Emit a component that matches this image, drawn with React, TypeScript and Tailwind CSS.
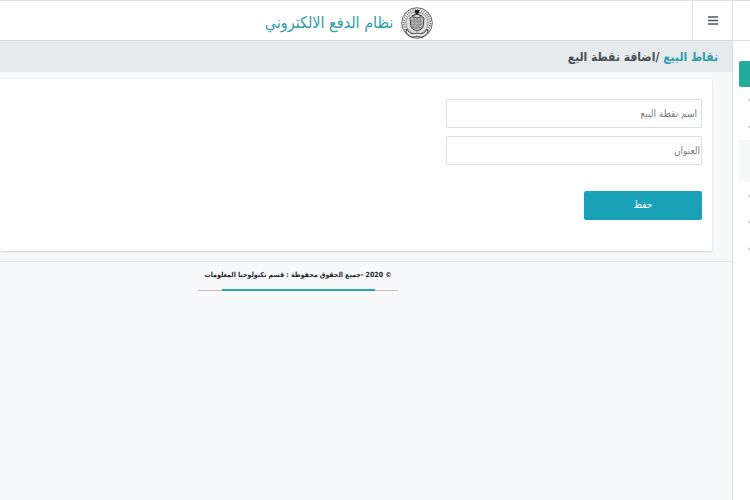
import React from "react";

const ticks = Array.from({ length: 36 }, (_, i) => (i * Math.PI) / 18);

function Seal() {
  return (
    <svg viewBox="0 0 32 32" className="size-8 shrink-0" aria-hidden="true">
      <circle cx="16" cy="16" r="15.3" fill="#f4f4f4" stroke="#555" strokeWidth="0.9" />
      <g stroke="#666" strokeWidth="0.9">
        {ticks.map((a) => (
          <line
            key={a}
            x1={16 + 12 * Math.cos(a)}
            y1={16 + 12 * Math.sin(a)}
            x2={16 + 14.2 * Math.cos(a + 0.06)}
            y2={16 + 14.2 * Math.sin(a + 0.06)}
          />
        ))}
      </g>
      <circle cx="16" cy="16" r="11.2" fill="#ddd" stroke="#777" strokeWidth="0.7" />
      <path d="M9 11c2-2 4-1 7 0 3-1 5-2 7 0l-1 9c-2 3-4 3-6 4-2-1-4-1-6-4z" fill="#bbb" stroke="#444" strokeWidth="1" />
      <path d="M10 14h12M10 17h12M11 20h10M13 11v11M16 11v12M19 11v11" stroke="#666" strokeWidth="0.8" strokeDasharray="2 1" />
      <path d="M6 22c3 6 7 5 10 4 3 1 7 2 10-4l1 3c-3 5-7 6-11 4-4 2-8 1-11-4z" fill="#eee" stroke="#333" strokeWidth="0.9" />
      <path d="M14 3h4v3l-2 2-2-2z" fill="#222" />
      <path d="M11 9l5-2 5 2" fill="none" stroke="#333" strokeWidth="1.1" />
    </svg>
  );
}

function NavItem({ label, className }: { label: string; className: string }) {
  return (
    <button type="button" aria-label={label} className={`flex w-60 items-center ps-2 ${className}`}>
      <svg viewBox="0 0 6 4" className="h-1 w-1.5" aria-hidden="true">
        <path d="M1 0.8l2 1.8 2-1.8" fill="none" stroke="#aaa" />
      </svg>
    </button>
  );
}

export default function App() {
  return (
    <div
      dir="rtl"
      className="flex min-h-screen overflow-hidden bg-[#f7f8fa] font-['DejaVu_Sans_Condensed','DejaVu_Sans',sans-serif] text-[#495057]"
    >
      <aside className="w-[18px] shrink-0 overflow-hidden border-e border-t border-[#d8dadd] bg-white">
        <div className="h-10 border-b border-[#dcdee0]" />
        <nav dir="ltr" className="flex flex-col pt-5 ps-1.5">
          <button type="button" aria-label="الرئيسية" className="h-[26px] w-60 rounded-xs bg-[#22ab97]" />
          <NavItem label="المستخدمين" className="h-[26px]" />
          <NavItem label="التقارير" className="h-[27px]" />
          <button type="button" aria-label="نقاط البيع" className="h-[42px] w-60 rounded-xs bg-[#f6f7f9]" />
          <NavItem label="الفواتير" className="h-[27px]" />
          <NavItem label="الحسابات" className="h-[26px]" />
          <NavItem label="الاعدادات" className="h-[27px]" />
        </nav>
      </aside>

      <div className="min-w-0 flex-1">
        <header className="flex h-[41px] items-stretch border-y border-t-[#dfe1e3] border-b-[#d3d6d9] bg-white">
          <button
            type="button"
            aria-label="القائمة"
            className="flex w-10 items-center justify-center border-e border-[#dfe1e3]"
          >
            <svg viewBox="0 0 10 9" className="h-[9px] w-2.5" aria-hidden="true">
              <path d="M0 1h10M0 4.5h10M0 8h10" stroke="#4d5560" strokeWidth="1.6" />
            </svg>
          </button>
          <div className="flex flex-1 items-center justify-center gap-2 pt-1 pe-1.5">
            <Seal />
            <span className="text-base whitespace-nowrap text-[#2b9dab]">نظام الدفع الالكتروني</span>
          </div>
        </header>

        <div className="flex h-[31px] items-center bg-[#e7eaed] px-3.5 text-xs font-bold whitespace-pre text-[#4a4d52]">
          <a href="#" className="text-[#2b9dab]">نقاط البيع</a>
          <h1> /اضافة نقطة اليع</h1>
        </div>

        <main className="ms-5 mt-[7px] rounded-xs bg-white pt-5 pb-[31px] shadow-[0_1px_2px_#d4d6d9]">
          <form className="flex flex-col items-start ps-2.5" onSubmit={(e) => e.preventDefault()}>
            <input
              type="text"
              aria-label="اسم نقطة البيع"
              placeholder="اسم نقطة البيع"
              className="h-[29px] w-64 rounded-xs border border-[#dcdee1] px-1 text-[10px] outline-none placeholder:text-[#777b80]"
            />
            <input
              type="text"
              aria-label="العنوان"
              placeholder="العنوان"
              className="mt-2 h-[29px] w-64 rounded-xs border border-[#dcdee1] px-px text-[10px] outline-none placeholder:text-[#777b80]"
            />
            <button type="submit" className="mt-[26px] h-[29px] w-[118px] rounded-xs bg-[#1ba1b7] pb-0.5 text-[10px] text-white">
              حفظ
            </button>
          </form>
        </main>

        <footer className="mt-2.5 border-t border-[#e5e7ea] pt-1">
          <div className="ms-[334px] flex w-[200px] flex-col items-center text-[#212529]">
            <p className="text-[7px] leading-[18px] font-bold whitespace-nowrap">
              © 2020 -جميع الحقوق محفوظة : قسم تكنولوجيا المعلومات
            </p>
            <div className="mt-[5px] flex h-0.5 w-full items-center justify-center bg-[linear-gradient(#d9b5b5,#d9b5b5)] bg-[length:100%_1px] bg-center bg-no-repeat">
              <div className="h-0.5 w-[153px] bg-[#2ba5a5]" />
            </div>
          </div>
        </footer>
      </div>
    </div>
  );
}
